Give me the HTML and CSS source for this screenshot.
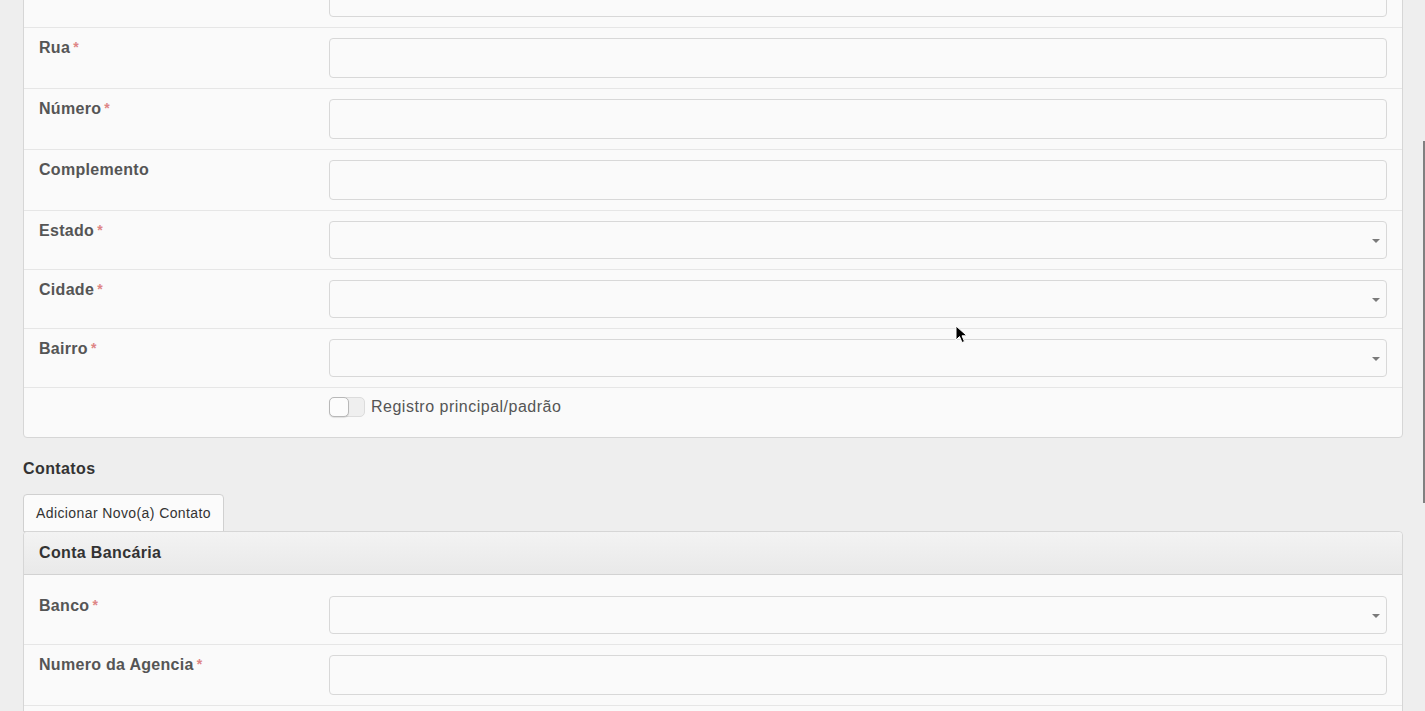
FILE: index.html
```html
<!DOCTYPE html>
<html lang="pt-BR">
<head>
    <meta charset="UTF-8">
    <meta name="viewport" content="width=device-width, initial-scale=1.0">
    <title>Cadastro</title>
    <link rel="stylesheet" href="styles.css">
</head>
<body>
    <div class="page">
        <div class="panel panel-top">
            <div class="row">
                <div class="label"></div>
                <div class="field"><input type="text" class="input"></div>
            </div>
            <div class="row">
                <div class="label">Rua<span class="req">*</span></div>
                <div class="field"><input type="text" class="input"></div>
            </div>
            <div class="row">
                <div class="label">Número<span class="req">*</span></div>
                <div class="field"><input type="text" class="input"></div>
            </div>
            <div class="row">
                <div class="label">Complemento</div>
                <div class="field"><input type="text" class="input"></div>
            </div>
            <div class="row">
                <div class="label">Estado<span class="req">*</span></div>
                <div class="field"><div class="select"><span class="caret"></span></div></div>
            </div>
            <div class="row">
                <div class="label">Cidade<span class="req">*</span></div>
                <div class="field"><div class="select"><span class="caret"></span></div></div>
            </div>
            <div class="row">
                <div class="label">Bairro<span class="req">*</span></div>
                <div class="field"><div class="select"><span class="caret"></span></div></div>
            </div>
            <div class="row row-switch">
                <div class="label"></div>
                <div class="field">
                    <label class="switch">
                        <span class="track"><span class="knob"></span></span>
                        Registro principal/padrão
                    </label>
                </div>
            </div>
        </div>

        <h3 class="section-title">Contatos</h3>
        <button class="btn">Adicionar Novo(a) Contato</button>

        <div class="panel panel-bank">
            <div class="panel-heading">Conta Bancária</div>
            <div class="panel-body">
                <div class="row">
                    <div class="label">Banco<span class="req">*</span></div>
                    <div class="field"><div class="select"><span class="caret"></span></div></div>
                </div>
                <div class="row">
                    <div class="label">Numero da Agencia<span class="req">*</span></div>
                    <div class="field"><input type="text" class="input"></div>
                </div>
                <div class="row">
                    <div class="label"></div>
                    <div class="field"><input type="text" class="input"></div>
                </div>
            </div>
        </div>
    </div>

    <div class="scroll-thumb"></div>

    <svg class="cursor" width="14" height="20" viewBox="0 0 14 20">
        <path d="M1 1 L1 15 L4.5 11.5 L7 17.5 L9.5 16.5 L7 10.8 L12 10.8 Z" fill="#000" stroke="#fff" stroke-width="1"/>
    </svg>
</body>
</html>
```

FILE: styles.css
```css
body {
    margin: 0;
    background: #eeeeee;
    font-family: "Liberation Sans", Arial, sans-serif;
    color: #555;
    overflow: hidden;
    height: 711px;
}
.page {
    padding: 0 22px 0 23px;
}
.panel {
    background: #fafafa;
    border: 1px solid #d6d6d6;
    border-radius: 4px;
}
.panel-top {
    margin-top: -34px;
}
.row {
    display: flex;
    padding: 10px 15px;
    border-bottom: 1px solid #e6e6e6;
}
.row:last-child {
    border-bottom: none;
}
.label {
    width: 290px;
    flex-shrink: 0;
    font-size: 16px;
    line-height: 20px;
    font-weight: bold;
    letter-spacing: 0.3px;
    color: #555;
}
.req {
    color: #de8585;
    font-size: 14px;
    margin-left: 3px;
    vertical-align: top;
    line-height: 18px;
}
.field {
    flex: 1;
}
.input {
    display: block;
    box-sizing: border-box;
    width: 100%;
    height: 40px;
    margin: 0;
    border: 1px solid #d8d8d8;
    border-radius: 4px;
    background: #fafafa;
}
.select {
    position: relative;
    box-sizing: border-box;
    height: 38px;
    border: 1px solid #d8d8d8;
    border-radius: 4px;
    background: #fafafa;
}
.caret {
    position: absolute;
    right: 6px;
    top: 17px;
    width: 0;
    height: 0;
    border-left: 4px solid transparent;
    border-right: 4px solid transparent;
    border-top: 4px solid #7a7a7a;
}
.row-switch {
    padding: 9px 15px 20px;
}
.switch {
    display: flex;
    align-items: center;
    gap: 6px;
    font-size: 16px;
    letter-spacing: 0.5px;
    line-height: 20px;
    color: #555;
}
.track {
    position: relative;
    box-sizing: border-box;
    width: 36px;
    height: 20px;
    border: 1px solid #dcdcdc;
    border-radius: 5px;
    background: #efefef;
}
.knob {
    position: absolute;
    left: -1px;
    top: -1px;
    box-sizing: border-box;
    width: 20px;
    height: 20px;
    border: 1px solid #b8b8b8;
    border-radius: 5px;
    background: #fcfcfc;
    box-shadow: 0 1px 1px rgba(0, 0, 0, 0.1);
}
.section-title {
    margin: 20px 0 14px;
    font-size: 16px;
    line-height: 22px;
    letter-spacing: 0.4px;
    color: #333;
}
.btn {
    display: block;
    height: 38px;
    margin: 0 0 -1px;
    padding: 0 12px;
    border: 1px solid #d0d0d0;
    border-radius: 4px 4px 0 0;
    background: #fbfbfb;
    font-family: "Liberation Sans", Arial, sans-serif;
    font-size: 14px;
    letter-spacing: 0.4px;
    color: #333;
}
.panel-heading {
    padding: 10px 15px;
    height: 22px;
    line-height: 22px;
    font-size: 16px;
    font-weight: bold;
    letter-spacing: 0.35px;
    color: #333;
    background: linear-gradient(to bottom, #f3f3f3, #e9e9e9);
    border-bottom: 1px solid #d2d2d2;
    border-radius: 4px 4px 0 0;
}
.panel-body {
    padding-top: 11px;
}
.panel-body .row:last-child {
    border-bottom: 1px solid #e6e6e6;
}
.scroll-thumb {
    position: absolute;
    left: 1423px;
    top: 141px;
    width: 2px;
    height: 362px;
    background: #808080;
}
.cursor {
    position: absolute;
    left: 955px;
    top: 325px;
}
```
